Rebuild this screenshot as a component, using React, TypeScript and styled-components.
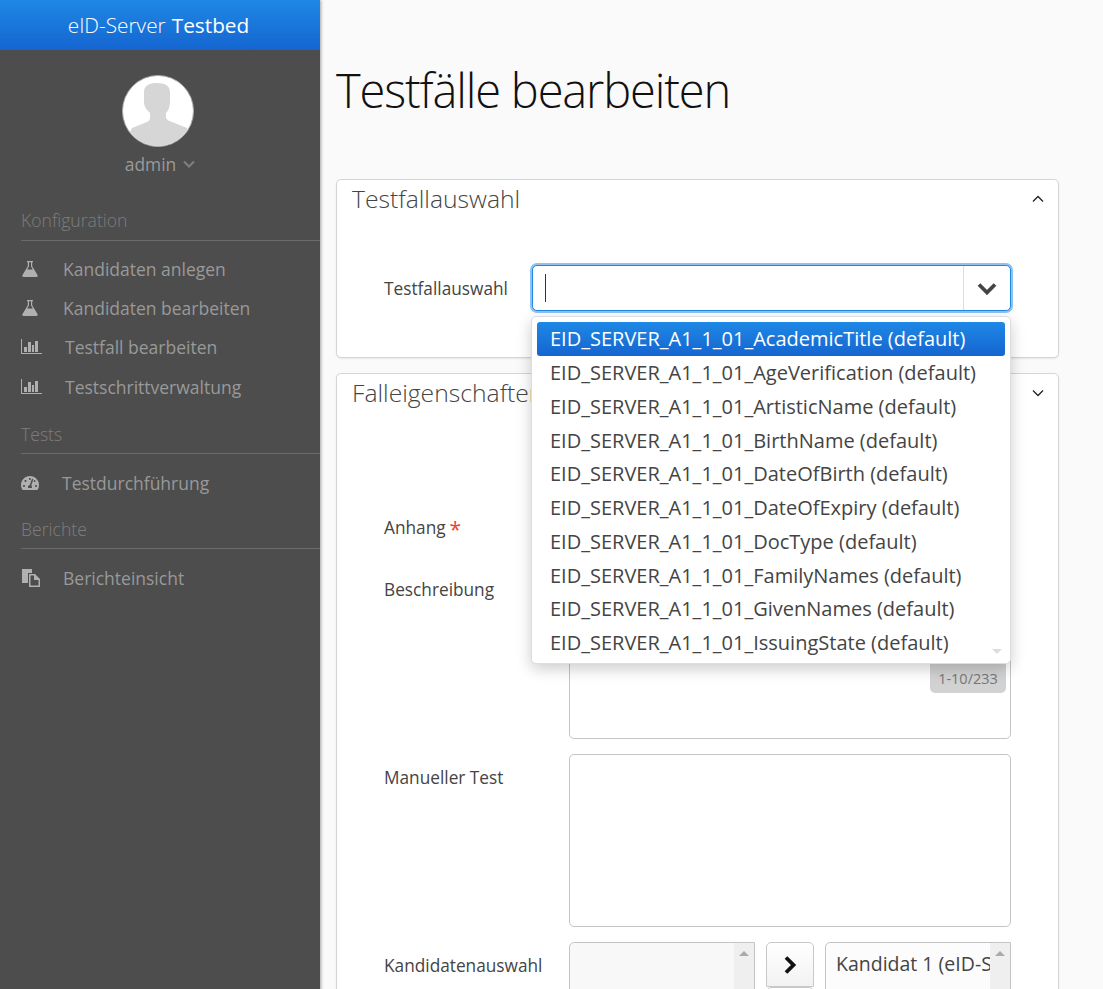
import React from 'react';
import styled, { createGlobalStyle } from 'styled-components';
import { FaTachometerAlt } from 'react-icons/fa';

const GlobalStyle = createGlobalStyle`
  html, body { margin: 0; padding: 0; height: 989px; overflow: hidden; }
  body { font-family: "Open Sans", sans-serif; background: #fafafa; color: #444; }
`;

const Page = styled.div`
  display: grid;
  grid-template-columns: 320px 1fr;
  height: 989px;
  overflow: hidden;
`;

const Sidebar = styled.aside`
  background: #4d4d4d;
  box-shadow: 1px 0 3px rgba(0, 0, 0, 0.35);
  z-index: 2;
`;

const Brand = styled.div`
  height: 50px;
  padding-right: 3px;
  display: flex;
  align-items: center;
  justify-content: center;
  gap: 6px;
  background: linear-gradient(#1e88e5, #1565d0);
  color: #fff;
  font-size: 20.8px;
`;

const BrandLight = styled.span`
  font-weight: 300;
`;

const Profile = styled.div`
  display: flex;
  flex-direction: column;
  align-items: center;
  padding: 25px 5px 0 0;
`;

const Avatar = styled.div`
  width: 72px;
  height: 72px;
  border-radius: 50%;
  background: #fff;
  box-sizing: border-box;
  border: 1px solid #aaa;
  overflow: hidden;
`;

const AdminName = styled.div`
  margin: 5px 0 0 5px;
  display: flex;
  align-items: center;
  gap: 7px;
  font-size: 17.4px;
  color: #9a9a9a;
`;

const Section = styled.div<{ $top: number; $pad: number }>`
  margin: ${(p) => p.$top}px 0 0 21px;
  padding-bottom: ${(p) => p.$pad}px;
  border-bottom: 1px solid #6b6b6b;
  color: #7d7d7d;
  font-size: 17.6px;
  font-weight: 300;
  line-height: 24px;
`;

const NavList = styled.div<{ $pad: number }>`
  padding: ${(p) => p.$pad}px 0 0 21px;
`;

const NavItem = styled.div<{ $gap: number }>`
  height: 39.4px;
  display: flex;
  align-items: center;
  gap: ${(p) => p.$gap}px;
  font-size: 17.5px;
  color: #999;
`;

const IconBox = styled.span<{ $width: number; $size?: number }>`
  display: flex;
  justify-content: center;
  width: ${(p) => p.$width}px;
  color: #b0b0b0;
  font-size: ${(p) => p.$size || 16}px;
`;

const Main = styled.main`
  padding: 0 44px 0 16px;
  min-width: 0;
`;

const Title = styled.h1`
  margin: 58px 0 56px;
  font-size: 47px;
  font-weight: 300;
  line-height: 65px;
  color: #111;
  letter-spacing: -1.15px;
`;

const Panel = styled.section<{ $height?: number }>`
  position: relative;
  background: #fff;
  border: 1px solid #d5d5d5;
  border-radius: 5px;
  box-shadow: 0 1px 2px rgba(0, 0, 0, 0.08);
  margin-bottom: 15px;
  box-sizing: border-box;
  ${(p) => (p.$height ? `height: ${p.$height}px;` : '')}
`;

const PanelTitle = styled.h2`
  margin: 0;
  padding: 2px 15px;
  font-size: 24.7px;
  font-weight: 300;
  line-height: 33px;
  color: #444;
`;

const Toggle = styled.svg`
  position: absolute;
  top: 15px;
  right: 14px;
`;

const SelectRow = styled.div`
  display: grid;
  grid-template-columns: 148px 479px;
  align-items: center;
  margin: 48px 0 0 47px;
`;

const FieldLabel = styled.label`
  font-size: 17.25px;
  color: #444;
  line-height: 22px;
`;

const Required = styled.span`
  color: #ef4136;
  margin-left: 4px;
  font-size: 21px;
  line-height: 1;
  vertical-align: -3px;
`;

const Combo = styled.div`
  position: relative;
  height: 46px;
  box-sizing: border-box;
  display: flex;
  background: #fff;
  border: 1px solid #1e88e5;
  border-radius: 5px;
  box-shadow: 0 0 0 2px #8fc1f2;
`;

const ComboInput = styled.div`
  flex: 1;
  display: flex;
  align-items: center;
  padding-left: 12px;
`;

const Caret = styled.span`
  width: 1px;
  height: 28px;
  background: #333;
`;

const ComboButton = styled.div`
  width: 46px;
  display: flex;
  align-items: center;
  justify-content: center;
  border-left: 1px solid #ddd;
  color: #444;
`;

const Dropdown = styled.ul`
  position: absolute;
  top: 50px;
  left: -2px;
  width: 480px;
  height: 348px;
  margin: 0;
  padding: 5px 5px 4px;
  box-sizing: border-box;
  list-style: none;
  background: #fff;
  border: 1px solid #ddd;
  border-radius: 5px;
  box-shadow: 0 5px 15px rgba(0, 0, 0, 0.2);
  z-index: 5;
`;

const Option = styled.li<{ $active?: boolean }>`
  height: 33.75px;
  padding-left: 13px;
  display: flex;
  align-items: center;
  font-size: 20px;
  white-space: nowrap;
  border-radius: 3px;
  color: ${(p) => (p.$active ? '#fff' : '#444')};
  background: ${(p) => (p.$active ? 'linear-gradient(#1e88e5, #1565d0)' : 'transparent')};
`;

const OptionArrow = styled.span`
  position: absolute;
  right: 8px;
  bottom: 9px;
  border-left: 5px solid transparent;
  border-right: 5px solid transparent;
  border-top: 5px solid #ddd;
`;

const FormBody = styled.div`
  padding: 0 47px;
`;

const FormRow = styled.div<{ $top: number }>`
  display: grid;
  grid-template-columns: 185px 1fr;
  margin-top: ${(p) => p.$top}px;
`;

const RowLabel = styled(FieldLabel)<{ $pad: number }>`
  padding-top: ${(p) => p.$pad}px;
`;

const TextBox = styled.div<{ $height: number }>`
  position: relative;
  height: ${(p) => p.$height}px;
  box-sizing: border-box;
  background: #fff;
  border: 1px solid #c4c4c4;
  border-radius: 5px;
`;

const Counter = styled.span`
  position: absolute;
  top: 97px;
  right: 4px;
  width: 76px;
  height: 29px;
  display: flex;
  align-items: center;
  justify-content: center;
  background: #d2d2d2;
  border-radius: 0 0 5px 5px;
  color: #777;
  font-size: 14.5px;
`;

const Picker = styled.div`
  display: grid;
  grid-template-columns: 186px 48px 186px;
  column-gap: 11px;
`;

const ListBox = styled.div<{ $fill?: boolean }>`
  position: relative;
  height: 100px;
  box-sizing: border-box;
  padding: 7px 0 0 10px;
  overflow: hidden;
  white-space: nowrap;
  background: ${(p) => (p.$fill ? '#fcfcfc' : '#f8f8f8')};
  border: 1px solid #c4c4c4;
  border-radius: 5px 0 0 5px;
  font-size: 19.5px;
  color: #444;
`;

const ScrollTrack = styled.div`
  position: absolute;
  top: 0;
  right: 0;
  bottom: 0;
  width: 20px;
  background: #efefef;
  display: flex;
  justify-content: center;
  padding-top: 8px;
  box-sizing: border-box;
`;

const ScrollArrow = styled.span`
  width: 0;
  height: 0;
  border-left: 5px solid transparent;
  border-right: 5px solid transparent;
  border-bottom: 5px solid #aaa;
`;

const MoveButtons = styled.div`
  display: flex;
  flex-direction: column;
`;

const MoveButton = styled.div`
  height: 45px;
  box-sizing: border-box;
  display: flex;
  align-items: center;
  justify-content: center;
  background: linear-gradient(#fff, #f2f2f2);
  border: 1px solid #c8c8c8;
  border-radius: 5px 5px 0 0;
  color: #111;
`;

const ChevronDownThick = () => (
  <svg width="20" height="13" viewBox="0 0 20 13" fill="none" stroke="currentColor" strokeWidth="3.8">
    <path d="M2 2.5l8 8 8-8" />
  </svg>
);

const ChevronRightThick = () => (
  <svg width="14" height="18" viewBox="0 0 14 18" fill="none" stroke="currentColor" strokeWidth="3.8">
    <path d="M3 1.5l7.5 7.5L3 16.5" />
  </svg>
);

const FlaskIcon = () => (
  <svg width="16" height="16" viewBox="0 0 16 16" fill="currentColor" fillRule="evenodd">
    <path d="M5 0h6v1.2h-.8v4L15.5 14c.5 1 0 2-1.2 2H1.7C.5 16 0 15 .5 14L5.8 5.2V1.2H5zM7 1.2v4.4L5.2 8.6h5.6L9 5.6V1.2z" />
  </svg>
);

const BarChartIcon = () => (
  <svg width="21" height="16" viewBox="0 0 21 16" fill="currentColor">
    <rect x="0" y="0" width="1" height="15" />
    <rect x="0" y="14" width="21" height="1" />
    <rect x="3" y="8" width="3" height="5" />
    <rect x="7" y="3" width="3" height="10" />
    <rect x="11" y="6" width="2" height="7" />
    <rect x="14" y="2" width="3" height="11" />
  </svg>
);

const FilesIcon = () => (
  <svg width="18" height="18" viewBox="0 0 18 18" fill="currentColor">
    <path d="M0 0h10v4H6v10H0z" />
    <path d="M7 5h6l5 5v8H7zM8.5 6.5v10h8v-5.5h-4.5V6.5z" />
    <path d="M13.5 6.5l3 3h-3z" />
  </svg>
);

const UserShape = () => (
  <svg width="70" height="70" viewBox="0 0 70 70" fill="#d6d6d6">
    <path d="M21 16C21 9 27 7 34 7c8 0 13 3 13 9v10c0 5-2 9-4 11v4c0 2 2 4 6 5l15 6 6 18H0l9-18 15-6c3-1 3-3 3-5v-4c-3-3-6-6-6-11z" />
  </svg>
);

const options = [
  'AcademicTitle', 'AgeVerification', 'ArtisticName', 'BirthName', 'DateOfBirth',
  'DateOfExpiry', 'DocType', 'FamilyNames', 'GivenNames', 'IssuingState',
];

const App = () => {
  return (
    <Page>
      <GlobalStyle />
      <Sidebar>
        <Brand><BrandLight>eID-Server</BrandLight> Testbed</Brand>
        <Profile>
          <Avatar><UserShape /></Avatar>
          <AdminName>admin <svg width="12" height="8" viewBox="0 0 12 8" fill="none" stroke="#808080" strokeWidth="2"><path d="M1 1.5l5 5 5-5" /></svg></AdminName>
        </Profile>
        <Section $top={32} $pad={8}>Konfiguration</Section>
        <NavList $pad={8}>
          <NavItem $gap={24}><IconBox $width={18}><FlaskIcon /></IconBox>Kandidaten anlegen</NavItem>
          <NavItem $gap={24}><IconBox $width={18}><FlaskIcon /></IconBox>Kandidaten bearbeiten</NavItem>
          <NavItem $gap={23}><IconBox $width={21}><BarChartIcon /></IconBox>Testfall bearbeiten</NavItem>
          <NavItem $gap={23}><IconBox $width={21}><BarChartIcon /></IconBox>Testschrittverwaltung</NavItem>
        </NavList>
        <Section $top={15} $pad={7}>Tests</Section>
        <NavList $pad={10}>
          <NavItem $gap={23}><IconBox $width={18} $size={18}><FaTachometerAlt /></IconBox>Testdurchführung</NavItem>
        </NavList>
        <Section $top={14} $pad={7}>Berichte</Section>
        <NavList $pad={9}>
          <NavItem $gap={23}><IconBox $width={19}><FilesIcon /></IconBox>Berichteinsicht</NavItem>
        </NavList>
      </Sidebar>
      <Main>
        <Title>Testfälle bearbeiten</Title>
        <Panel $height={179}>
          <PanelTitle>Testfallauswahl</PanelTitle>
          <Toggle width="12" height="8" viewBox="0 0 12 8" fill="none" stroke="#222" strokeWidth="1.3"><path d="M1 6.5l5-5 5 5" /></Toggle>
          <SelectRow>
            <RowLabel $pad={2}>Testfallauswahl</RowLabel>
            <Combo>
              <ComboInput><Caret /></ComboInput>
              <ComboButton><ChevronDownThick /></ComboButton>
              <Dropdown>
                {options.map((name, index) => (
                  <Option key={name} $active={index === 0}>EID_SERVER_A1_1_01_{name} (default)</Option>
                ))}
                <OptionArrow />
              </Dropdown>
            </Combo>
          </SelectRow>
        </Panel>
        <Panel>
          <PanelTitle>Falleigenschaften</PanelTitle>
          <Toggle width="12" height="8" viewBox="0 0 12 8" fill="none" stroke="#222" strokeWidth="1.3"><path d="M1 1.5l5 5 5-5" /></Toggle>
          <FormBody>
            <FormRow $top={94}>
              <RowLabel $pad={12}>Anhang<Required>*</Required></RowLabel>
              <div />
            </FormRow>
            <FormRow $top={26}>
              <RowLabel $pad={13}>Beschreibung</RowLabel>
              <TextBox $height={173}><Counter>1-10/233</Counter></TextBox>
            </FormRow>
            <FormRow $top={15}>
              <RowLabel $pad={13}>Manueller Test</RowLabel>
              <TextBox $height={173} />
            </FormRow>
            <FormRow $top={15}>
              <RowLabel $pad={13}>Kandidatenauswahl</RowLabel>
              <Picker>
                <ListBox><ScrollTrack><ScrollArrow /></ScrollTrack></ListBox>
                <MoveButtons>
                  <MoveButton><ChevronRightThick /></MoveButton>
                  <MoveButton />
                </MoveButtons>
                <ListBox $fill>Kandidat 1 (eID-Server)<ScrollTrack><ScrollArrow /></ScrollTrack></ListBox>
              </Picker>
            </FormRow>
          </FormBody>
        </Panel>
      </Main>
    </Page>
  );
};

export default App;
